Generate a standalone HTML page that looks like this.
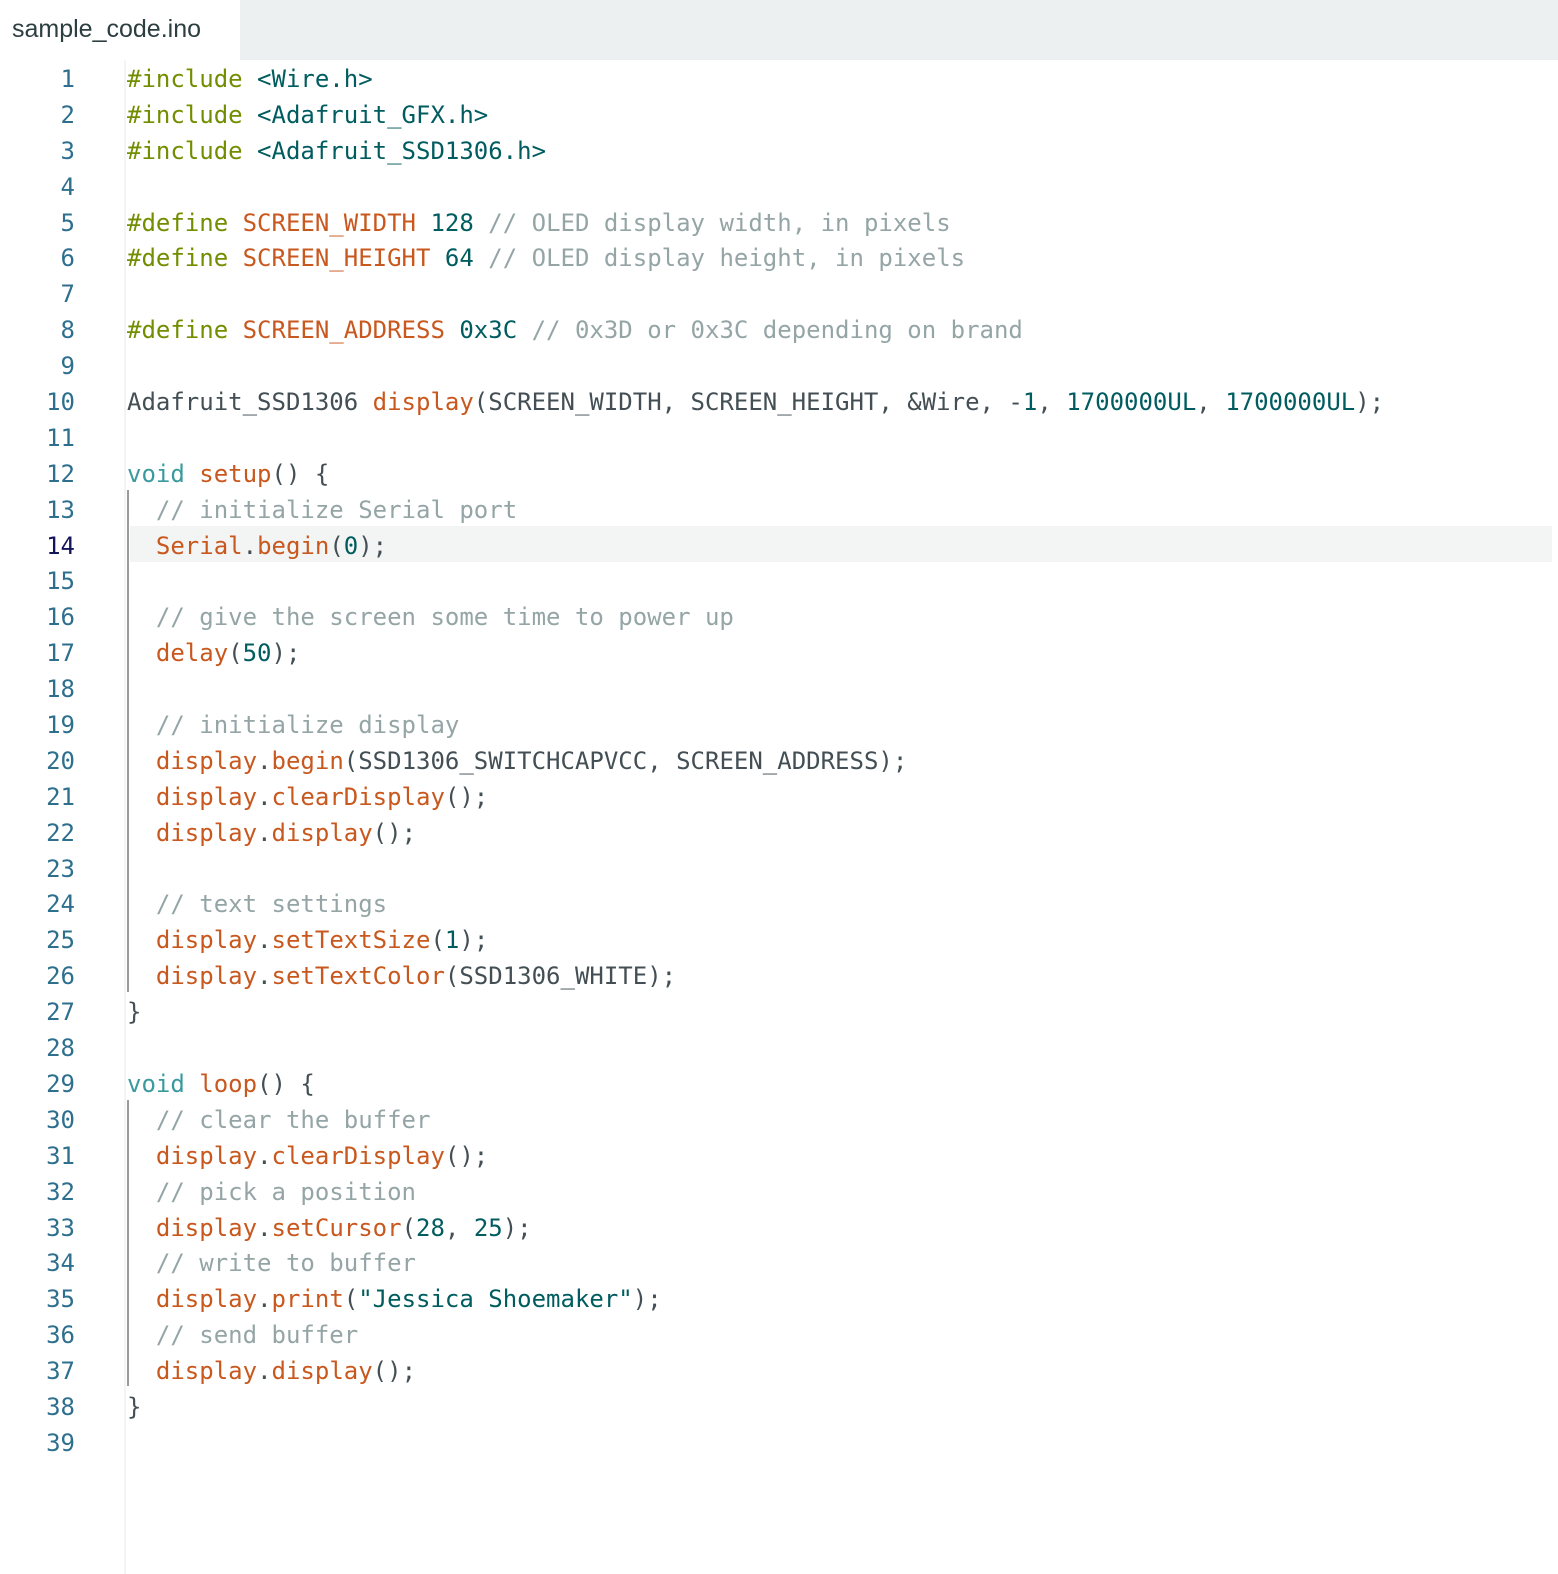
<!DOCTYPE html>
<html><head><meta charset="utf-8"><style>
*{margin:0;padding:0;box-sizing:border-box}
html,body{width:1558px;height:1574px;background:#fff;overflow:hidden}
.tabbar{position:absolute;left:0;top:0;width:1558px;height:60px;background:#ecf0f1}
.tab{position:absolute;left:0;top:0;width:240px;height:60px;background:#fff;font:25px "Liberation Sans",sans-serif;color:#2c3e40;padding:15px 0 0 12px}
.gutter{position:absolute;left:124px;top:60px;width:2px;height:1514px;background:#f3f4f4}
.hl{position:absolute;left:130px;top:526px;width:1422px;height:36px;background:#f3f4f4}
.guide{position:absolute;left:127px;width:2px;background:#9a9a9a}
.code{position:absolute;left:0;top:62px;width:1558px;font:24px "DejaVu Sans Mono",monospace;color:#434f54}
.l{height:35.9px;line-height:35.9px;position:relative}
.n{position:absolute;left:0;text-align:right;color:#2e6f8e;width:75px}
.t{position:absolute;left:127px;white-space:pre}
.p{color:#728e00}.o{color:#c8581e}.v{color:#005c5f}.c{color:#95a5a6}.k{color:#3a9a9e}
.cur{color:#13145a}
</style></head><body>
<div class="tabbar"></div><div class="tab">sample_code.ino</div>
<div class="gutter"></div>
<div class="hl"></div>
<div class="guide" style="top:490px;height:502px"></div>
<div class="guide" style="top:1100px;height:286px"></div>
<div class="code"><div class="l"><span class="n">1</span><span class="t"><span class="p">#include</span> <span class="v">&lt;Wire.h&gt;</span></span></div><div class="l"><span class="n">2</span><span class="t"><span class="p">#include</span> <span class="v">&lt;Adafruit_GFX.h&gt;</span></span></div><div class="l"><span class="n">3</span><span class="t"><span class="p">#include</span> <span class="v">&lt;Adafruit_SSD1306.h&gt;</span></span></div><div class="l"><span class="n">4</span></div><div class="l"><span class="n">5</span><span class="t"><span class="p">#define</span> <span class="o">SCREEN_WIDTH</span> <span class="v">128</span> <span class="c">// OLED display width, in pixels</span></span></div><div class="l"><span class="n">6</span><span class="t"><span class="p">#define</span> <span class="o">SCREEN_HEIGHT</span> <span class="v">64</span> <span class="c">// OLED display height, in pixels</span></span></div><div class="l"><span class="n">7</span></div><div class="l"><span class="n">8</span><span class="t"><span class="p">#define</span> <span class="o">SCREEN_ADDRESS</span> <span class="v">0x3C</span> <span class="c">// 0x3D or 0x3C depending on brand</span></span></div><div class="l"><span class="n">9</span></div><div class="l"><span class="n">10</span><span class="t">Adafruit_SSD1306 <span class="o">display</span>(SCREEN_WIDTH, SCREEN_HEIGHT, &amp;Wire, -<span class="v">1</span>, <span class="v">1700000UL</span>, <span class="v">1700000UL</span>);</span></div><div class="l"><span class="n">11</span></div><div class="l"><span class="n">12</span><span class="t"><span class="k">void</span> <span class="o">setup</span>() {</span></div><div class="l"><span class="n">13</span><span class="t">  <span class="c">// initialize Serial port</span></span></div><div class="l"><span class="n cur">14</span><span class="t">  <span class="o">Serial</span>.<span class="o">begin</span>(<span class="v">0</span>);</span></div><div class="l"><span class="n">15</span></div><div class="l"><span class="n">16</span><span class="t">  <span class="c">// give the screen some time to power up</span></span></div><div class="l"><span class="n">17</span><span class="t">  <span class="o">delay</span>(<span class="v">50</span>);</span></div><div class="l"><span class="n">18</span></div><div class="l"><span class="n">19</span><span class="t">  <span class="c">// initialize display</span></span></div><div class="l"><span class="n">20</span><span class="t">  <span class="o">display</span>.<span class="o">begin</span>(SSD1306_SWITCHCAPVCC, SCREEN_ADDRESS);</span></div><div class="l"><span class="n">21</span><span class="t">  <span class="o">display</span>.<span class="o">clearDisplay</span>();</span></div><div class="l"><span class="n">22</span><span class="t">  <span class="o">display</span>.<span class="o">display</span>();</span></div><div class="l"><span class="n">23</span></div><div class="l"><span class="n">24</span><span class="t">  <span class="c">// text settings</span></span></div><div class="l"><span class="n">25</span><span class="t">  <span class="o">display</span>.<span class="o">setTextSize</span>(<span class="v">1</span>);</span></div><div class="l"><span class="n">26</span><span class="t">  <span class="o">display</span>.<span class="o">setTextColor</span>(SSD1306_WHITE);</span></div><div class="l"><span class="n">27</span><span class="t">}</span></div><div class="l"><span class="n">28</span></div><div class="l"><span class="n">29</span><span class="t"><span class="k">void</span> <span class="o">loop</span>() {</span></div><div class="l"><span class="n">30</span><span class="t">  <span class="c">// clear the buffer</span></span></div><div class="l"><span class="n">31</span><span class="t">  <span class="o">display</span>.<span class="o">clearDisplay</span>();</span></div><div class="l"><span class="n">32</span><span class="t">  <span class="c">// pick a position</span></span></div><div class="l"><span class="n">33</span><span class="t">  <span class="o">display</span>.<span class="o">setCursor</span>(<span class="v">28</span>, <span class="v">25</span>);</span></div><div class="l"><span class="n">34</span><span class="t">  <span class="c">// write to buffer</span></span></div><div class="l"><span class="n">35</span><span class="t">  <span class="o">display</span>.<span class="o">print</span>(<span class="v">"Jessica Shoemaker"</span>);</span></div><div class="l"><span class="n">36</span><span class="t">  <span class="c">// send buffer</span></span></div><div class="l"><span class="n">37</span><span class="t">  <span class="o">display</span>.<span class="o">display</span>();</span></div><div class="l"><span class="n">38</span><span class="t">}</span></div><div class="l"><span class="n">39</span></div></div>
</body></html>
